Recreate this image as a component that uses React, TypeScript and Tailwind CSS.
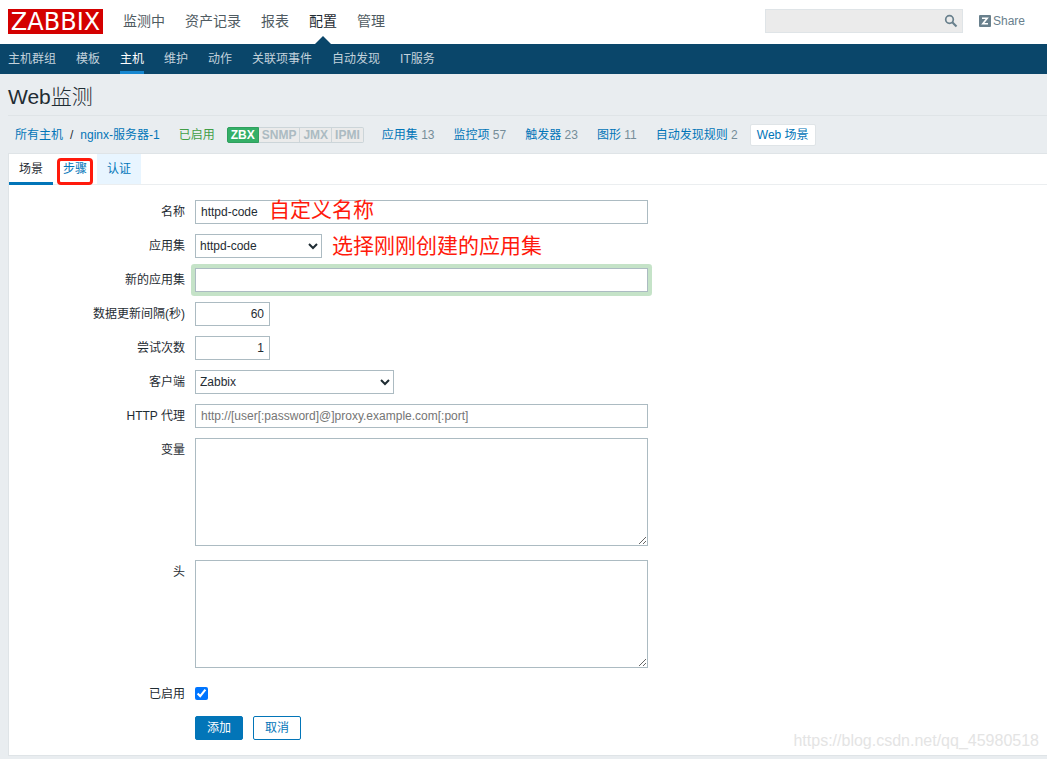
import React, { useState } from 'react';

const mainMenu = ['监测中', '资产记录', '报表', '配置', '管理'];
const subMenu = ['主机群组', '模板', '主机', '维护', '动作', '关联项事件', '自动发现', 'IT服务'];
const interfaces = ['ZBX', 'SNMP', 'JMX', 'IPMI'];
const tabs = ['场景', '步骤', '认证'];

const hostLinks = [
    { label: '应用集', count: 13 },
    { label: '监控项', count: 57 },
    { label: '触发器', count: 23 },
    { label: '图形', count: 11 },
    { label: '自动发现规则', count: 2 }
];

const fieldClass = 'h-6 border border-[#acbbc2] bg-white px-[5px] text-xs text-[#1f2c33] outline-none placeholder:text-[#757575]';
const selectClass = 'h-6 border border-[#acbbc2] bg-white text-xs text-[#1f2c33] outline-none';
const areaClass = 'block h-[108px] w-full max-w-[453px] resize border border-[#acbbc2] bg-white p-1 text-xs outline-none';

interface RowProps {
    label: string;
    id: string;
    children: React.ReactNode;
}

function Row({ label, id, children }: RowProps) {
    return (
        <div className="grid grid-cols-[176px_1fr] gap-x-[10px]">
            <label htmlFor={id} className="h-6 text-right leading-6">{label}</label>
            <div className="min-w-0">{children}</div>
        </div>
    );
}

function Header() {
    return (
        <header>
            <div className="flex h-11 items-center bg-white pb-[2px] pl-2 pr-[22px]">
                <a href="#" className="flex h-[25px] w-[95px] items-center justify-center bg-[#d40000] pt-[2px] font-['DejaVu_Sans',sans-serif] text-2xl leading-none text-white">ZABBIX</a>
                <nav className="ml-5 flex h-full gap-5 text-sm">
                    {mainMenu.map(item => (
                        <a
                            key={item}
                            href="#"
                            className={item === '配置' ? 'relative flex items-center text-[#1f2c33]' : 'flex items-center text-[#4f5b62]'}
                        >
                            {item}
                            {item === '配置' && (
                                <svg className="absolute -bottom-[2px] left-1/2 -translate-x-1/2" width="16" height="8" viewBox="0 0 16 8">
                                    <path d="M0 8 8 0l8 8z" fill="#0a466a" />
                                </svg>
                            )}
                        </a>
                    ))}
                </nav>
                <form className="relative ml-auto h-6 w-[198px]">
                    <input aria-label="搜索" className="h-full w-full border border-[#dfe4e7] bg-[#ebebeb] pl-1 pr-6 text-xs outline-none" />
                    <button type="button" aria-label="搜索" className="absolute right-[5px] top-[5px]">
                        <svg width="14" height="14" viewBox="0 0 14 14" fill="none" stroke="#69808d">
                            <circle cx="5.5" cy="5.5" r="3.8" strokeWidth="1.7" />
                            <path d="m8.3 8.3 4.2 4.2" strokeWidth="2.1" />
                        </svg>
                    </button>
                </form>
                <a href="#" className="ml-4 flex items-center gap-[2px] text-xs text-[#69808d]">
                    <svg width="12" height="12" viewBox="0 0 12 12">
                        <rect width="12" height="12" rx="1" fill="#69808d" />
                        <path d="M3 3.2h5.2L3.8 8.8H9" fill="none" stroke="#fff" strokeWidth="1.6" />
                    </svg>
                    Share
                </a>
            </div>
            <nav className="flex h-[30px] gap-5 bg-[#0a466a] pl-2 text-[#c3d2dc]">
                {subMenu.map(item => (
                    <a
                        key={item}
                        href="#"
                        className={item === '主机'
                            ? 'border-b-[3px] border-[#1787d0] leading-[30px] text-white'
                            : 'leading-[30px]'}
                    >
                        {item}
                    </a>
                ))}
            </nav>
        </header>
    );
}

function HostBar() {
    return (
        <div className="ml-2 flex h-[38px] items-center whitespace-nowrap border-t border-[#dfe4e7] pl-[7px] text-[#0275b8]">
            <a href="#">所有主机</a>
            <span className="mx-[7px] text-[#1f2c33]">/</span>
            <a href="#">nginx-服务器-1</a>
            <span className="ml-[19px] text-[#429e47]">已启用</span>
            <span className="ml-3 flex h-4 font-bold leading-[14px]">
                {interfaces.map(name => (
                    <span
                        key={name}
                        className={name === 'ZBX'
                            ? 'rounded-l-xs border border-[#2f9f5e] bg-[#34af67] px-[3px] text-white'
                            : 'border border-l-0 border-[#ccd5d9] bg-[#ebebeb] px-[3px] text-[#acbbc2] last:rounded-r-xs'}
                    >
                        {name}
                    </span>
                ))}
            </span>
            <div className="ml-[18px] flex items-center gap-[19px]">
                {hostLinks.map(link => (
                    <span key={link.label}>
                        <a href="#">{link.label}</a> <span className="text-[#768d99]">{link.count}</span>
                    </span>
                ))}
            </div>
            <a href="#" className="ml-[12px] rounded-xs border border-[#dfe4e7] bg-white px-[6px] leading-5">Web 场景</a>
        </div>
    );
}

export default function App() {
    const [name, setName] = useState('httpd-code');
    const [newApp, setNewApp] = useState('');
    const [delay, setDelay] = useState('60');
    const [retries, setRetries] = useState('1');
    const [enabled, setEnabled] = useState(true);

    return (
        <div className="relative min-h-screen bg-[#e9edf0] font-['Liberation_Sans','Noto_Sans_CJK_SC',sans-serif] text-xs text-[#1f2c33]">
            <Header />
            <h1 className="flex h-[41px] items-center pl-2 pt-1 text-[21px] font-light">Web监测</h1>
            <HostBar />

            <main className="ml-2 border-y border-l border-[#dfe4e7] bg-white">
                <div role="tablist" className="flex h-[31px] border-b border-[#ebeef0]">
                    {tabs.map(tab => (
                        <button
                            key={tab}
                            type="button"
                            role="tab"
                            aria-selected={tab === '场景'}
                            className={
                                tab === '场景' ? 'h-[31px] w-11 border-b-[3px] border-[#0275b8] pt-[2px]'
                                    : tab === '步骤' ? 'relative h-[30px] w-11 text-[#0275b8]'
                                        : 'h-[30px] w-11 bg-[#e8f5ff] text-[#0275b8]'
                            }
                        >
                            {tab}
                            {tab === '步骤' && <span className="absolute inset-x-1 -bottom-px top-1 rounded-sm border-3 border-[#ff1a0c]" />}
                        </button>
                    ))}
                </div>

                <form className="flex flex-col gap-[10px] pb-[15px] pt-[15px]">
                    <Row label="名称" id="name">
                        <div className="relative max-w-[453px]">
                            <input id="name" className={`${fieldClass} block w-full`} value={name} onChange={e => setName(e.target.value)} />
                            <span className="pointer-events-none absolute -top-[2px] left-[74px] text-[21px] leading-6 text-[#ff1a0c]">自定义名称</span>
                        </div>
                    </Row>
                    <Row label="应用集" id="application">
                        <div className="flex gap-[10px]">
                            <select id="application" className={`${selectClass} w-[127px]`}>
                                <option>httpd-code</option>
                            </select>
                            <span className="text-[21px] leading-6 text-[#ff1a0c]">选择刚刚创建的应用集</span>
                        </div>
                    </Row>
                    <Row label="新的应用集" id="new-application">
                        <div className="max-w-[453px] rounded-[1px] ring-4 ring-[#c5e3c8]">
                            <input
                                id="new-application"
                                className={`${fieldClass} block w-full`}
                                value={newApp}
                                onChange={e => setNewApp(e.target.value)}
                            />
                        </div>
                    </Row>
                    <Row label="数据更新间隔(秒)" id="delay">
                        <input id="delay" className={`${fieldClass} block w-[75px] text-right`} value={delay} onChange={e => setDelay(e.target.value)} />
                    </Row>
                    <Row label="尝试次数" id="retries">
                        <input id="retries" className={`${fieldClass} block w-[75px] text-right`} value={retries} onChange={e => setRetries(e.target.value)} />
                    </Row>
                    <Row label="客户端" id="agent">
                        <select id="agent" className={`${selectClass} block w-[199px]`}>
                            <option>Zabbix</option>
                        </select>
                    </Row>
                    <Row label="HTTP 代理" id="proxy">
                        <input
                            id="proxy"
                            className={`${fieldClass} block w-full max-w-[453px]`}
                            placeholder="http://[user[:password]@]proxy.example.com[:port]"
                        />
                    </Row>
                    <Row label="变量" id="variables">
                        <textarea id="variables" className={`${areaClass} mb-1`} />
                    </Row>
                    <Row label="头" id="headers">
                        <textarea id="headers" className={`${areaClass} mb-1`} />
                    </Row>
                    <Row label="已启用" id="enabled">
                        <div className="flex h-[22px] items-center">
                            <input id="enabled" type="checkbox" className="h-[13px] w-[13px]" checked={enabled} onChange={e => setEnabled(e.target.checked)} />
                        </div>
                    </Row>
                    <div className="flex gap-[10px] pl-[186px]">
                        <button type="button" className="h-6 w-12 rounded-xs border border-[#0275b8] bg-[#0275b8] text-white">添加</button>
                        <button type="button" className="h-6 w-12 rounded-xs border border-[#0275b8] bg-white text-[#0275b8]">取消</button>
                    </div>
                </form>
            </main>

            <span className="pointer-events-none absolute bottom-[6px] right-2 text-base text-[#e4e4e4]">https://blog.csdn.net/qq_45980518</span>
        </div>
    );
}
